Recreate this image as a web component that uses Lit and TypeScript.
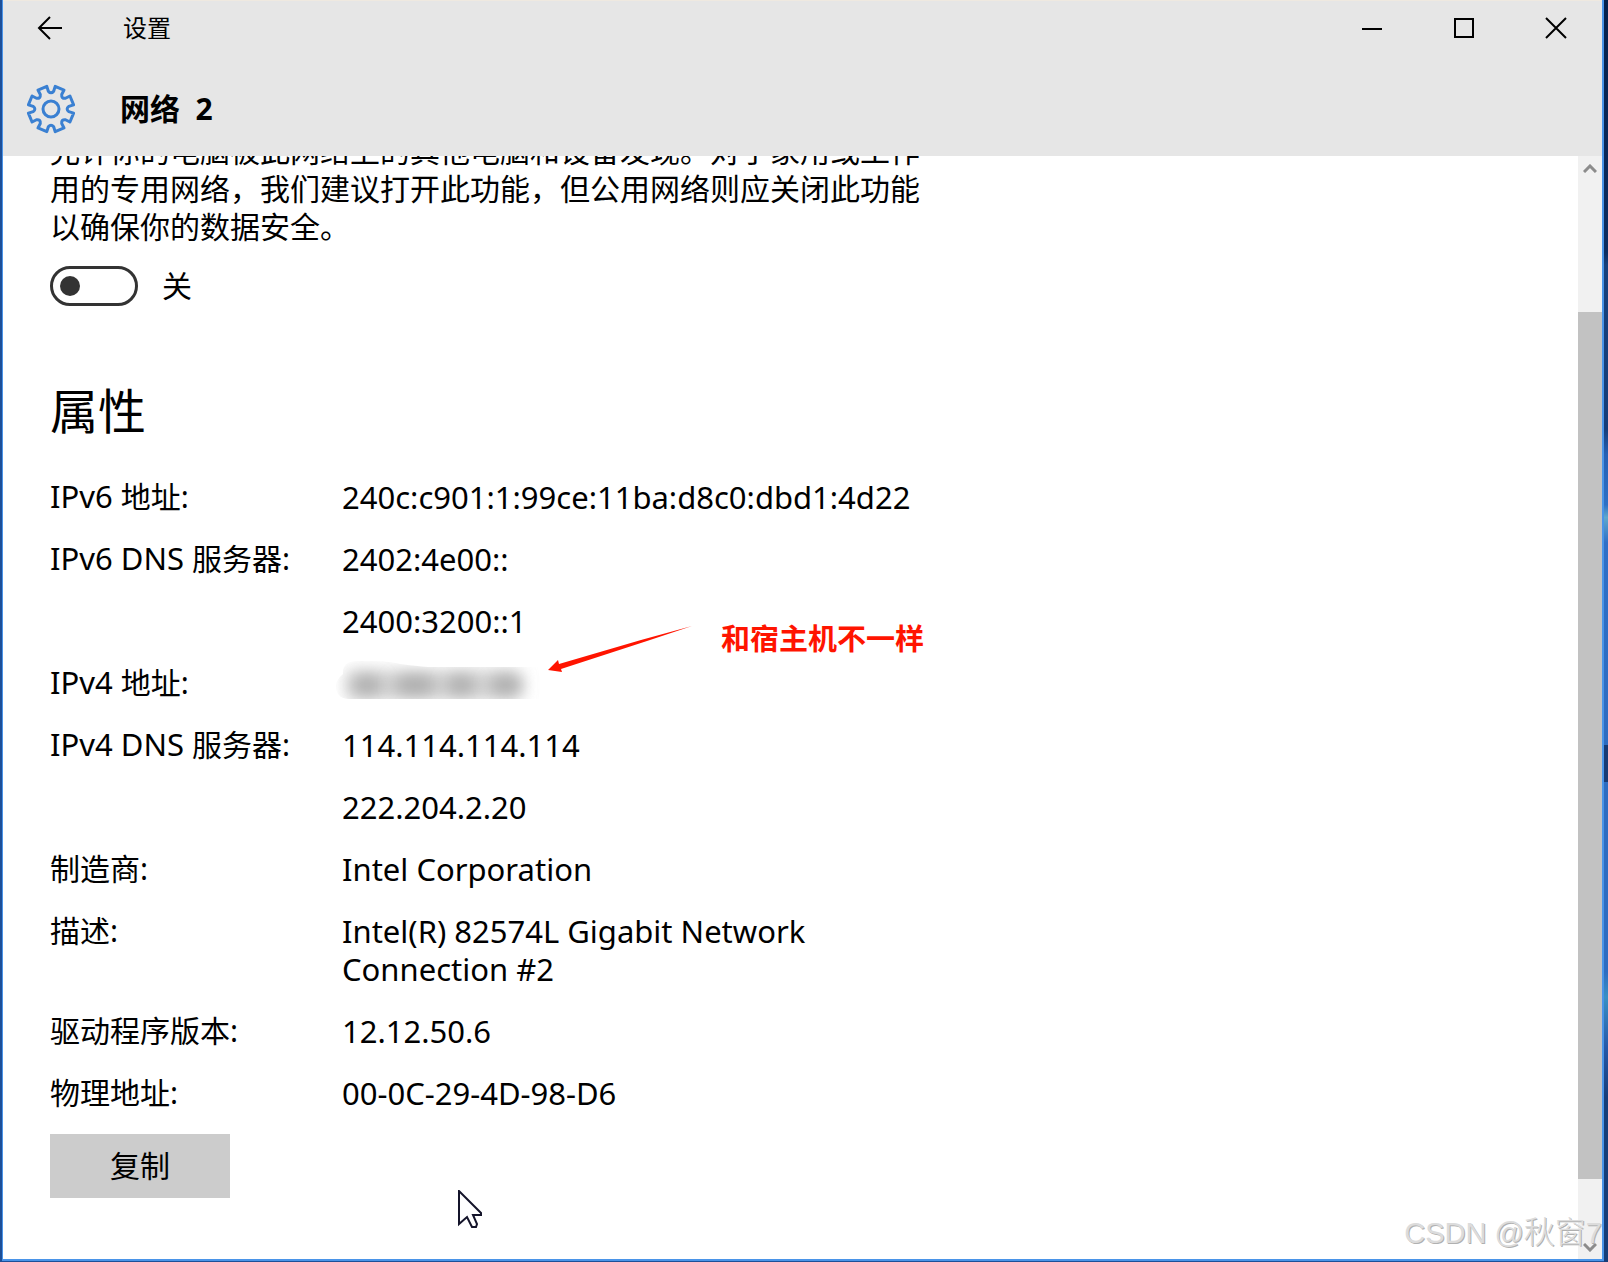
import { LitElement, html, css, svg, nothing } from "lit";
import { customElement, property, state } from "lit/decorators.js";

interface Row {
  latin?: string;
  label: string;
  values: string[];
  hidden?: boolean;
}

const ROWS: Row[] = [
  { latin: "IPv6", label: "地址:", values: ["240c:c901:1:99ce:11ba:d8c0:dbd1:4d22"] },
  { latin: "IPv6 DNS", label: "服务器:", values: ["2402:4e00::", "2400:3200::1"] },
  { latin: "IPv4", label: "地址:", values: [], hidden: true },
  { latin: "IPv4 DNS", label: "服务器:", values: ["114.114.114.114", "222.204.2.20"] },
  { label: "制造商:", values: ["Intel Corporation"] },
  { label: "描述:", values: ["Intel(R) 82574L Gigabit Network Connection #2"] },
  { label: "驱动程序版本:", values: ["12.12.50.6"] },
  { label: "物理地址:", values: ["00-0C-29-4D-98-D6"] },
];

/* Outline of an eight-toothed gear, centred on 0,0. */
function gearPath(): string {
  const pts: string[] = [];
  const at = (r: number, deg: number) => {
    const a = (deg * Math.PI) / 180;
    return `${(r * Math.cos(a)).toFixed(2)} ${(r * Math.sin(a)).toFixed(2)}`;
  };
  for (let i = 0; i < 8; i++) {
    const c = i * 45 + 22.5;
    pts.push(`${i ? "L" : "M"}${at(18, c - 14)}`);
    pts.push(`L${at(23, c - 12)}`, `L${at(23, c + 12)}`, `L${at(18, c + 14)}`);
    pts.push(`Q${at(14.5, c + 22.5)} ${at(18, c + 31)}`);
  }
  return pts.join("") + "Z";
}

@customElement("settings-titlebar")
export class SettingsTitlebar extends LitElement {
  @property() heading = "";

  static styles = css`
    :host { display: block; background: #e6e6e6; color: #000; box-shadow: inset 0 1px #efe9e0; }
    .bar { display: flex; align-items: center; height: 56px; }
    button { border: 0; padding: 0; background: none; height: 56px; display: grid; place-items: center; }
    svg { display: block; fill: none; stroke: #000; stroke-width: 2; }
    .back { width: 94px; }
    .app { flex: 1; font-size: 24px; line-height: 36px; padding-left: 26px; }
    .system { width: 92px; }
    .page { display: flex; align-items: center; height: 100px; padding: 6px 0 0 23px; gap: 44px; box-sizing: border-box; }
    .gear { stroke: #3a80d2; stroke-width: 3; stroke-linejoin: round; }
    h1 { margin: 0; font-size: 30px; line-height: 38px; font-weight: 700; white-space: pre; }
  `;

  render() {
    return html`
      <div class="bar">
        <button class="back" aria-label="返回">
          <svg width="26" height="24" viewBox="0 0 26 24"><path d="M25 12H2M13 1L2 12L13 23" /></svg>
        </button>
        <span class="app">设置</span>
        <button class="system" aria-label="最小化">
          <svg width="20" height="20" viewBox="0 0 20 20"><path d="M0 11H20" /></svg>
        </button>
        <button class="system" aria-label="最大化">
          <svg width="20" height="20" viewBox="0 0 20 20"><rect x="1" y="1" width="18" height="18" /></svg>
        </button>
        <button class="system" aria-label="关闭">
          <svg width="22" height="22" viewBox="0 0 22 22"><path d="M1 1L21 21M21 1L1 21" /></svg>
        </button>
      </div>
      <div class="page">
        <svg class="gear" width="50" height="50" viewBox="-25 -25 50 50">
          <path d=${gearPath()} /><circle r="8" />
        </svg>
        <h1>${this.heading}</h1>
      </div>
    `;
  }
}

@customElement("app-root")
export class AppRoot extends LitElement {
  @state() private discoverable = false;

  static styles = css`
    :host {
      display: block;
      font-family: "Noto Sans", "Noto Sans CJK SC", sans-serif;
      color: #000;
    }
    * { box-sizing: border-box; }
    button, input { font: inherit; color: inherit; }
    .desktop {
      position: relative;
      min-height: 100vh;
      display: flex;
      padding: 0 4px 1px 2px;
      background:
        linear-gradient(#04204c 0, #0c2c60 20%, #17407c 21%, #163d78 34%, #2560b4 36%, #2f70c4 40%, #5fa8cc 41%, #2f6fc6 43%, #2e6cc0 59%, #173a74 59%, #173a74 62%, #2e6cc0 62%, #2e6cc0 77%, #3a90c4 79%, #2558a8 83%, #163d78 87%, #163d78 100%) right / 4px 100% no-repeat,
        #1d4f98;
    }
    .window {
      flex: 1;
      min-width: 0;
      display: flex;
      flex-direction: column;
      border: solid #4a94e8;
      border-width: 0 2px 2px 1px;
      background: #fff;
    }
    .body { flex: 1; display: flex; min-height: 0; }
    .content { flex: 1; min-width: 0; overflow: hidden; padding: 0 47px 60px; font-size: 30px; line-height: 38px; }
    .note { margin: -24px 0 20px; width: 872px; max-width: 100%; }
    .switch { display: flex; align-items: center; gap: 24px; height: 40px; }
    .switch input {
      appearance: none;
      margin: 0;
      width: 88px;
      height: 40px;
      padding: 7px;
      border: 3px solid #333;
      border-radius: 20px;
      display: flex;
    }
    .switch input::before { content: ""; width: 20px; height: 20px; border-radius: 50%; background: #333; }
    .switch input:checked { justify-content: flex-end; }
    h2 { margin: 74px 0 36px; font-size: 48px; line-height: 62px; font-weight: 400; }
    .props { display: grid; grid-template-columns: 268px minmax(0, 580px); column-gap: 24px; row-gap: 24px; margin: 0; }
    dt { white-space: nowrap; }
    dd { margin: 0; display: grid; align-content: start; row-gap: 24px; font-size: 31px; }
    .latin { font-size: 31px; line-height: 30px; }
    .masked { position: relative; height: 38px; }
    .mask { position: absolute; left: -6px; top: -4px; }
    .remark { position: absolute; left: 205px; top: -42px; display: flex; gap: 28px; align-items: flex-start; }
    .remark span { color: #ff1400; font-size: 29px; line-height: 34px; font-weight: 700; white-space: nowrap; }
    .copy { display: block; margin: 22px 0 0; width: 180px; height: 64px; border: 0; background: #ccc; padding: 0; }
    .scroll { width: 24px; display: flex; flex-direction: column; background: #f1f1f1; }
    .scroll button { height: 24px; border: 0; padding: 0; background: none; display: grid; place-items: center; }
    .scroll svg { display: block; fill: none; stroke: #8c8c8c; stroke-width: 3; }
    .track { flex: 1; display: flex; flex-direction: column; padding: 132px 0 56px; }
    .thumb { flex: 1; background: #c2c2c2; }
    .cursor { position: absolute; left: 458px; top: 1190px; }
    .watermark {
      position: absolute;
      right: 6px;
      bottom: 10px;
      white-space: nowrap;
      font: 300 29px/38px "Liberation Sans", "Noto Sans CJK SC", sans-serif;
      color: #dcdcdc;
      text-shadow: 1px 1px 0 #b0b0b0;
    }
    .watermark span { font-size: 31px; line-height: 30px; }
  `;

  private renderRow(row: Row) {
    return html`
      <dt>${row.latin ? html`<span class="latin">${row.latin} </span>` : nothing}${row.label}</dt>
      <dd>
        ${row.values.map((v) => html`<span>${v}</span>`)}
        ${row.hidden ? this.renderMasked() : nothing}
      </dd>
    `;
  }

  private renderMasked() {
    const blobs = [
      [31, 25, 15], [79, 25, 22], [125, 25, 15], [170, 25, 17],
    ];
    return html`
      <div class="masked">
        <svg class="mask" width="215" height="42" viewBox="0 0 215 42" aria-hidden="true">
          <defs>
            <clipPath id="smear"><path d="M7 14Q6 2 20 1H42Q56 2 64 4Q80 6 92 7H215V39H12Q0 38 0 26Q0 20 7 14Z" /></clipPath>
            <filter id="soft" x="-60%" y="-100%" width="220%" height="300%"><feGaussianBlur stdDeviation="8" /></filter>
          </defs>
          <g clip-path="url(#smear)">
            <rect x="10" y="10" width="174" height="30" fill="#d4d4d4" filter="url(#soft)" />
            ${blobs.map(([x, y, r]) => svg`<ellipse cx=${x} cy=${y} rx=${r} ry="9" fill="#a8a8a8" filter="url(#soft)" />`)}
          </g>
        </svg>
        <div class="remark">
          <svg width="146" height="54" viewBox="0 0 146 54" aria-hidden="true">
            <path fill="#ff1400" d="M145 4L100 19L14 47L15 50L1 48L11 38L12 42L94 18Z" />
          </svg>
          <span>和宿主机不一样</span>
        </div>
      </div>
    `;
  }

  render() {
    return html`
      <div class="desktop">
        <main class="window">
          <settings-titlebar heading="网络  2"></settings-titlebar>
          <div class="body">
            <div class="content">
              <p class="note">允许你的电脑被此网络上的其他电脑和设备发现。对于家用或工作用的专用网络，我们建议打开此功能，但公用网络则应关闭此功能以确保你的数据安全。</p>
              <label class="switch">
                <input
                  type="checkbox"
                  role="switch"
                  .checked=${this.discoverable}
                  @change=${(e: Event) => (this.discoverable = (e.target as HTMLInputElement).checked)}
                />
                <span>${this.discoverable ? "开" : "关"}</span>
              </label>
              <h2>属性</h2>
              <dl class="props">${ROWS.map((r) => this.renderRow(r))}</dl>
              <button class="copy">复制</button>
            </div>
            <div class="scroll">
              <button aria-label="向上滚动">
                <svg width="14" height="9" viewBox="0 0 14 9"><path d="M1 8L7 2L13 8" /></svg>
              </button>
              <div class="track"><div class="thumb"></div></div>
              <button aria-label="向下滚动">
                <svg width="14" height="9" viewBox="0 0 14 9"><path d="M1 1L7 7L13 1" /></svg>
              </button>
            </div>
          </div>
        </main>
        <svg class="cursor" width="25" height="40" viewBox="0 0 25 40" aria-hidden="true">
          <path d="M1 1V34L9 27L14 37H18L19 34L15 25H23V23Z" fill="#fff" stroke="#14142a" stroke-width="2" />
        </svg>
        <div class="watermark">CSDN @<span>秋窗</span>7</div>
      </div>
    `;
  }
}
